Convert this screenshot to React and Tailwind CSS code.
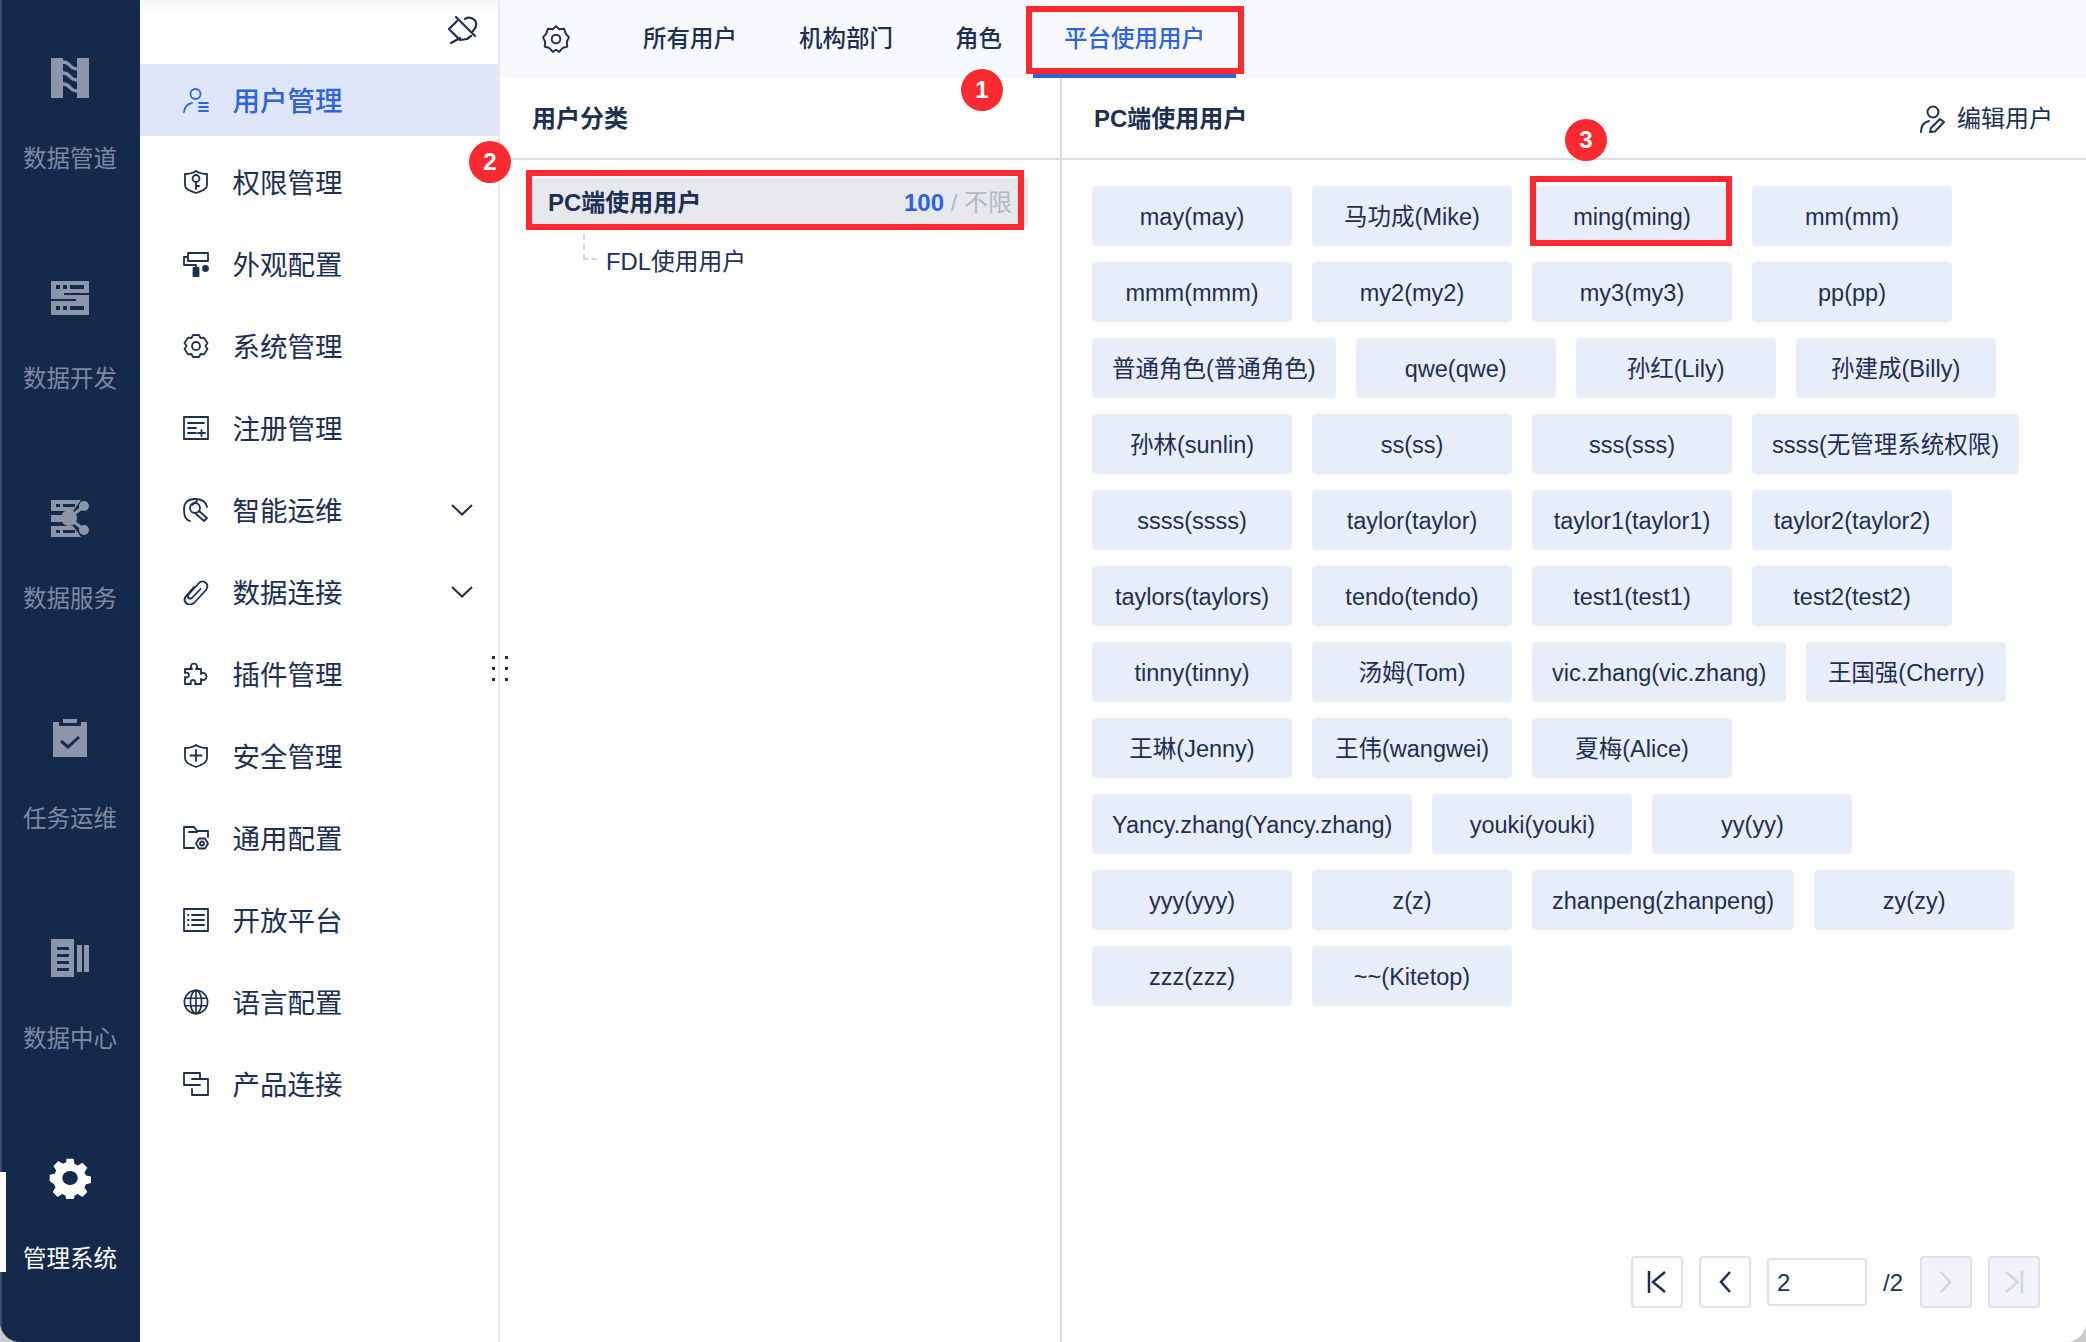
import React from "react";

const NAVY = "#1d2f52";

// left rail icons
const PipeIcon = () => (
  <svg width="38" height="40" viewBox="0 0 38 40" fill="none">
    <path d="M0 0h12v40H0zM26 0h12v40H26z" fill="#8c96aa" />
    <path d="M12 4c8 0 6 7 14 7M12 15c8 0 6 7 14 7M12 26c8 0 6 7 14 7" stroke="#8c96aa" strokeWidth="3.4" />
  </svg>
);

const ServerIcon = () => (
  <svg width="38" height="34" viewBox="0 0 38 34" fill="none">
    <path d="M0 0h38v12H13v2h25v20H0V20h25v-2H0z" fill="#8c96aa" fillRule="evenodd" />
    <path d="M5 4h4v4H5zM12 4h4v4h-4zM19 4h14v4H19zM5 25h4v4H5zM12 25h4v4h-4zM19 25h14v4H19z" fill="#15294b" />
  </svg>
);

const ServiceIcon = () => (
  <svg width="38" height="38" viewBox="0 0 38 38" fill="none">
    <path d="M0 1h30l-8 11H0zM0 27h22l8 11H0zM0 16h11v7H0z" fill="#8c96aa" />
    <path d="M5 5h4v3H5zM12 5h12v3H12zM5 31h4v3H5zM12 31h12v3H12z" fill="#15294b" />
    <path d="M18 19l14-11M18 19l14 11" stroke="#8c96aa" strokeWidth="3" />
    <circle cx="18" cy="19" r="8" fill="#8c96aa" />
    <circle cx="33" cy="7" r="5" fill="#8c96aa" />
    <circle cx="33" cy="31" r="5" fill="#8c96aa" />
  </svg>
);

const TaskIcon = () => (
  <svg width="34" height="38" viewBox="0 0 34 38" fill="none">
    <path d="M0 3h6v4h22V3h6v35H0z" fill="#8c96aa" />
    <path d="M10 0h14v4H10z" fill="#8c96aa" />
    <path d="M8 22l7 6 11-10" stroke="#15294b" strokeWidth="3" />
  </svg>
);

const CenterIcon = () => (
  <svg width="38" height="38" viewBox="0 0 38 38" fill="none">
    <path d="M0 0h23v38H0zM26 6h5v27h-5zM33 6h5v27h-5z" fill="#8c96aa" />
    <path d="M6 8h12v3H6zM6 15h12v3H6zM6 22h12v3H6zM6 29h12v3H6z" fill="#15294b" />
  </svg>
);

const SettingIcon = () => (
  <svg width="42" height="42" viewBox="0 0 24 24" fill="#ffffff">
    <path
      fillRule="evenodd"
      d="M10 1h4l.6 3 1.900.9 2.600-1.600 2.800 2.800-1.600 2.600.8 1.900 2.900.6v3.600l-2.900.7-.8 1.900 1.600 2.600-2.800 2.800-2.600-1.600-1.900.8-.6 2.900h-4l-.6-2.900-1.900-.8-2.600 1.600-2.800-2.800 1.600-2.600-.8-1.900L.4 13.800v-3.600l2.900-.6.8-1.900-1.600-2.600 2.800-2.800 2.600 1.600 1.900-.9zM12 8a4.400 4 0 1 0 .01 0z"
    />
  </svg>
);

// second column icons, all share one stroke
const Line = ({ children, size = 26, color = NAVY, sw = 1.8, view = "0 0 26 26" }) => (
  <svg width={size} height={size} viewBox={view} fill="none" stroke={color} strokeWidth={sw} strokeLinecap="round" strokeLinejoin="round">
    {children}
  </svg>
);

const icons = {
  user: (
    <Line color="#2d63dd">
      <circle cx="12.5" cy="7" r="5" />
      <path d="M1 25c.5-5 3.500-8 8-9M16 16h9M16 20h9M16 24h9" />
    </Line>
  ),
  shield: (
    <Line>
      <path d="M2 5c4 0 8-1 11-3 3 2 7 3 11 3v11c0 3-2 5-11 8C4 21 2 19 2 16z" />
      <circle cx="13" cy="9.5" r="3.5" />
      <path d="M13 13v7M13 17h3" />
    </Line>
  ),
  roller: (
    <Line>
      <path d="M5 6H1v8h12v3M5 2h20v8H5z" />
      <rect x="10.5" y="17" width="5" height="8" fill={NAVY} />
      <circle cx="22.5" cy="17.5" r="2.5" fill={NAVY} />
    </Line>
  ),
  gear: (
    <Line>
      <path d="M10 2h6l1.500 3 3.500-.3L24.500 10l-2 3 2 3-3.500 5.300-3.500-.3L16 24h-6l-1.500-3-3.500.3L1.500 16l2-3-2-3L5 4.700l3.500.3z" />
      <circle cx="13" cy="13" r="4" />
    </Line>
  ),
  register: (
    <Line>
      <path d="M1 2h24v22H1zM5 8h16M5 13h8M5 18h8M15 18h7M18.500 15v6" />
    </Line>
  ),
  ops: (
    <Line>
      <path d="M7 24C3 23 1 20 1 13S4 2 12 2c7 0 11 3 12 8" />
      <circle cx="12" cy="11" r="5" />
      <path d="M9 8l5-4M16 14l8 7-3 3-8-7" />
    </Line>
  ),
  clip: (
    <Line>
      <path d="M11 8L4 16c-3 3-3 6-1 8s5 2 8 0L23 11c2-3 2-5 0-7s-5-2-7 0L6 15c-1.500 2-1.500 3-.5 4s2.500 1 4-.5l8-8.500" />
    </Line>
  ),
  plugin: (
    <Line>
      <path d="M4 8h5c-1-1-1.500-2-1-3.500C9 2 13 2 14 4.500c.5 1.500 0 2.500-1 3.500h5v5c1-1 2.500-1.500 4-.5 2 1.500 2 5 0 6-1.500 1-3 .5-4-.5v5h-6c1-2 0-4-2-4s-3 2-2 4H2v-7c2 1 4 0 4-2S4 11 2 12V8z" />
    </Line>
  ),
  safe: (
    <Line>
      <path d="M2 5c4 0 8-1 11-3 3 2 7 3 11 3v10c0 4-3 6-11 9C5 21 2 19 2 15zM13 7v11M7.500 12.500h11" />
    </Line>
  ),
  folder: (
    <Line>
      <path d="M11 23H1V2h10l3 4h11v6M6 7h8" />
      <circle cx="19" cy="18.500" r="2" />
      <path d="M16 13.500h6l3 5-3 5h-6l-3-5z" />
    </Line>
  ),
  open: (
    <Line>
      <path d="M1 2h24v22H1zM9 8h12M9 13h12M9 18h12M5 8h.5M5 13h.5M5 18h.5" />
    </Line>
  ),
  globe: (
    <svg width="28" height="28" viewBox="0 0 28 28" fill="none" stroke={NAVY} strokeWidth="1.8">
      <circle cx="14" cy="14" r="12.500" />
      <ellipse cx="14" cy="14" rx="6" ry="12.500" />
      <path d="M14 1.500v25M2 10h24M2 18h24" />
    </svg>
  ),
  link: (
    <Line>
      <path d="M17 14H1V2h16v6M9 8h16v16H9v-6" />
    </Line>
  ),
};

const railItems = [
  { label: "数据管道", icon: <PipeIcon /> },
  { label: "数据开发", icon: <ServerIcon /> },
  { label: "数据服务", icon: <ServiceIcon /> },
  { label: "任务运维", icon: <TaskIcon /> },
  { label: "数据中心", icon: <CenterIcon /> },
  { label: "管理系统", icon: <SettingIcon />, active: true },
];

const navItems = [
  { label: "用户管理", icon: "user", active: true },
  { label: "权限管理", icon: "shield" },
  { label: "外观配置", icon: "roller" },
  { label: "系统管理", icon: "gear" },
  { label: "注册管理", icon: "register" },
  { label: "智能运维", icon: "ops", arrow: true },
  { label: "数据连接", icon: "clip", arrow: true },
  { label: "插件管理", icon: "plugin" },
  { label: "安全管理", icon: "safe" },
  { label: "通用配置", icon: "folder" },
  { label: "开放平台", icon: "open" },
  { label: "语言配置", icon: "globe" },
  { label: "产品连接", icon: "link" },
];

const users = [
  "may(may)", "马功成(Mike)", "ming(ming)", "mm(mm)",
  "mmm(mmm)", "my2(my2)", "my3(my3)", "pp(pp)",
  "普通角色(普通角色)", "qwe(qwe)", "孙红(Lily)", "孙建成(Billy)",
  "孙林(sunlin)", "ss(ss)", "sss(sss)", "ssss(无管理系统权限)",
  "ssss(ssss)", "taylor(taylor)", "taylor1(taylor1)", "taylor2(taylor2)",
  "taylors(taylors)", "tendo(tendo)", "test1(test1)", "test2(test2)",
  "tinny(tinny)", "汤姆(Tom)", "vic.zhang(vic.zhang)", "王国强(Cherry)",
  "王琳(Jenny)", "王伟(wangwei)", "夏梅(Alice)",
  "Yancy.zhang(Yancy.zhang)", "youki(youki)", "yy(yy)",
  "yyy(yyy)", "z(z)", "zhanpeng(zhanpeng)", "zy(zy)",
  "zzz(zzz)", "~~(Kitetop)",
];

const Rail = () => (
  <div className="w-[140px] shrink-0 bg-[#15294b] shadow-[inset_2px_0_0_#3f4e6f] flex flex-col">
    {railItems.map((item) => (
      <div key={item.label} className="h-[220px] flex flex-col items-center">
        <div className="h-[116px] flex items-center justify-center pt-[40px]">{item.icon}</div>
        <span className={`mt-[26px] text-[23.500px] leading-[34px] ${item.active ? "text-white" : "text-[#7f8aa1]"}`}>
          {item.label}
        </span>
      </div>
    ))}
  </div>
);

const SideNav = () => (
  <div className="w-[360px] shrink-0 bg-white border-r-2 border-[#e8e8f0] flex flex-col">
    <div className="h-[64px] flex justify-end items-start pt-[16px] pr-[20px] bg-linear-to-b from-[#f5f6fa] to-white to-[14px]">
      <svg width="30" height="28" viewBox="12 10 30 28" fill="none" stroke={NAVY} strokeWidth="2.2" strokeLinecap="round" strokeLinejoin="round">
        <path d="M20 11l19 19M21 15l-8 8 11 11M24 32l-9 5M24 34l7-1 4-3M29 13c3-3 10-1 11 4 1 4-1 6-3 8" />
      </svg>
    </div>
    <div className="flex flex-col gap-[10px]">
      {navItems.map((item) => (
        <div
          key={item.label}
          className={`h-[72px] flex items-center pl-[43px] pr-[25px] ${item.active ? "bg-[#e0e6f9] text-[#2d63dd] font-medium" : "text-[#1d2f52]"}`}
        >
          <span className="w-[26px] h-[28px] flex items-center justify-center">{icons[item.icon]}</span>
          <span className="ml-[23.500px] pt-[3px] text-[27.500px] leading-none">{item.label}</span>
          {item.arrow && (
            <svg className="ml-auto" width="22" height="12" viewBox="0 0 22 12" fill="none" stroke={NAVY} strokeWidth="2">
              <path d="M1 1l10 9.500L21 1" />
            </svg>
          )}
        </div>
      ))}
    </div>
  </div>
);

const TabBar = () => (
  <div className="h-[78px] shrink-0 bg-[#f8f9fd] flex items-center pl-[42px]">
    <svg width="28" height="28" viewBox="0 0 26 26" fill="none" stroke={NAVY} strokeWidth="1.800" strokeLinejoin="round">
      <path d="M13 1l3 3 4.500-.5 1.500 4.500 3 3.500-2 4 .5 4.500-4.500 1.500-3 3.500-3-2-3 2-3-3.500-4.500-1.500.5-4.500-2-4 3-3.500L5.500 3.500 10 4z" />
      <circle cx="13" cy="13" r="4" />
    </svg>
    <div className="ml-[42px] flex h-full text-[23.500px] font-medium text-[#1d2f52]">
      {["所有用户", "机构部门", "角色"].map((t) => (
        <div key={t} className="px-[31px] pt-[2px] flex items-center">{t}</div>
      ))}
      <div className="px-[31px] pt-[2px] flex items-center text-[#2d63dd] border-y-4 border-t-transparent border-b-[#2d63dd]">平台使用用户</div>
    </div>
  </div>
);

const CategoryPanel = () => (
  <div className="w-[562px] shrink-0 border-r-2 border-[#dcdde4] flex flex-col">
    <div className="h-[82px] shrink-0 border-b-2 border-[#dcdde4] flex items-center pl-[32px] pt-[2px] text-[24px] font-bold text-[#1d2f52]">
      用户分类
    </div>
    <div className="pt-[18px] pl-[28px]">
      <div className="w-[500px] h-[48px] bg-[#e7e8ee] flex items-center justify-between pl-[20px] pr-[16px] pt-[2px] text-[24px] font-bold text-[#1d2f52]">
        <span>PC端使用用户</span>
        <span className="font-normal text-[#b3b7c2]">
          <span className="font-bold text-[#2d63dd]">100</span> / 不限
        </span>
      </div>
      <div className="relative h-[40px] mt-[14px] pl-[78px] pt-[4px] flex items-center text-[23.800px] text-[#1d2f52]">
        <span className="absolute left-[55px] top-[-6px] w-[14px] h-[26px] border-l-2 border-b-2 border-dashed border-[#d3d5dc]" />
        FDL使用用户
      </div>
    </div>
  </div>
);

const PageButton = ({ disabled, children }) => (
  <div className={`w-[52px] h-[52px] rounded-[4px] border-2 border-[#dfe0e8] flex items-center justify-center ${disabled ? "bg-[#f2f3f8]" : "bg-white"}`}>
    {children}
  </div>
);

const UsersPanel = () => (
  <div className="flex-1 flex flex-col min-w-0">
    <div className="h-[82px] shrink-0 border-b-2 border-[#dcdde4] flex items-center justify-between pl-[32px] pr-[33px] pt-[2px] text-[#1d2f52]">
      <span className="text-[24px] font-bold">PC端使用用户</span>
      <span className="flex items-center gap-[11px] text-[24px]">
        <svg width="26" height="28" viewBox="0 0 26 28" fill="none" stroke={NAVY} strokeWidth="2" strokeLinecap="round" strokeLinejoin="round">
          <circle cx="13" cy="7" r="5.500" />
          <path d="M1 27c0-6 3-10 8-11M10 27l1-4 9-9 4 3-9 9.500z" />
        </svg>
        编辑用户
      </span>
    </div>
    <div className="flex-1 flex flex-wrap content-start gap-x-[20px] gap-y-[16px] pt-[26px] pl-[30px] pr-[36px]">
      {users.map((u) => (
        <div key={u} className="min-w-[200px] h-[60px] px-[20px] pt-[4px] rounded-[4px] bg-[#e8edfa] flex items-center justify-center text-[23.500px] text-[#1d2f52]">
          {u}
        </div>
      ))}
    </div>
    <div className="flex items-center justify-end gap-[16px] pr-[46px] pb-[34px] text-[24px] text-[#1d2f52]">
      <PageButton>
        <svg width="20" height="22" viewBox="0 0 20 22" fill="none" stroke={NAVY} strokeWidth="2.500"><path d="M2 0v22M18 1L6 11l12 10" /></svg>
      </PageButton>
      <PageButton>
        <svg width="12" height="22" viewBox="0 0 12 22" fill="none" stroke={NAVY} strokeWidth="2.500"><path d="M11 1L2 11l9 10" /></svg>
      </PageButton>
      <div className="w-[100px] h-[48px] rounded-[4px] border-2 border-[#dfe0e8] flex items-center pl-[8px] pt-[2px]">2</div>
      <span className="w-[21px] pt-[2px]">/2</span>
      <PageButton disabled>
        <svg width="12" height="22" viewBox="0 0 12 22" fill="none" stroke="#d3d5dc" strokeWidth="2.500"><path d="M1 1l9 10-9 10" /></svg>
      </PageButton>
      <PageButton disabled>
        <svg width="20" height="22" viewBox="0 0 20 22" fill="none" stroke="#d3d5dc" strokeWidth="2.500"><path d="M18 0v22M2 1l12 10L2 21" /></svg>
      </PageButton>
    </div>
  </div>
);

const Badge = ({ n, className }) => (
  <div className={`absolute w-[42px] h-[42px] rounded-full bg-[#fb2a30] text-white text-[24px] font-bold flex items-center justify-center ${className}`}>
    {n}
  </div>
);

export default function App() {
  return (
    <div className="relative w-[2086px] h-[1342px] overflow-hidden bg-[#c9c9c9] font-['Liberation_Sans','Noto_Sans_CJK_SC',sans-serif]">
      <div className="flex h-full rounded-b-[20px] overflow-hidden bg-white">
        <Rail />
        <SideNav />
        <div className="flex-1 flex flex-col min-w-0">
          <TabBar />
          <div className="flex-1 flex min-h-0">
            <CategoryPanel />
            <UsersPanel />
          </div>
        </div>
      </div>

      {/* active marker on the rail */}
      <div className="absolute left-0 top-[1172px] w-[6px] h-[100px] bg-white" />

      {/* resize handle */}
      <div className="absolute left-[492px] top-[656px] grid grid-cols-2 gap-x-[10px] gap-y-[8px]">
        {[0, 1, 2, 3, 4, 5].map((i) => (
          <span key={i} className="w-[3px] h-[3px] bg-[#1d2f52]" />
        ))}
      </div>

      {/* annotations */}
      <div className="absolute left-[1026px] top-[6px] w-[218px] h-[68px] border-[6px] border-[#fc2a30]" />
      <div className="absolute left-[526px] top-[170px] w-[498px] h-[60px] border-[6px] border-[#fc2a30]" />
      <div className="absolute left-[1530px] top-[176px] w-[202px] h-[70px] border-[6px] border-[#fc2a30]" />
      <Badge n="1" className="left-[961px] top-[69px]" />
      <Badge n="2" className="left-[469px] top-[141px]" />
      <Badge n="3" className="left-[1565px] top-[119px]" />
    </div>
  );
}
